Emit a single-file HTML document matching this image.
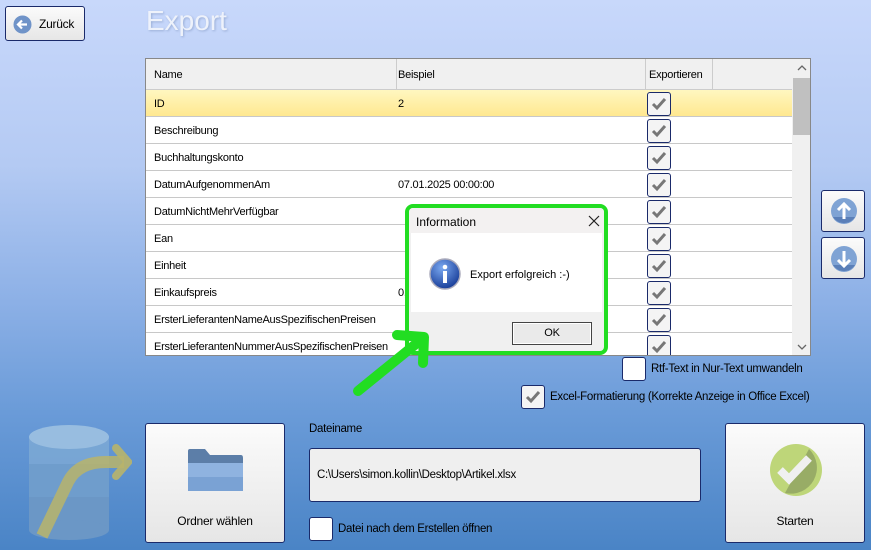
<!DOCTYPE html>
<html><head><meta charset="utf-8">
<style>
*{margin:0;padding:0;box-sizing:border-box}
body{width:871px;height:550px;overflow:hidden;position:relative;font-family:"Liberation Sans",sans-serif;font-size:11px;color:#000;letter-spacing:-0.25px;
background:linear-gradient(180deg,#c8d8fb 0%,#b4caf3 30%,#8cb0e6 55%,#6a9bd8 75%,#4a84c6 100%);}
.abs{position:absolute}
.btn{position:absolute;border:1px solid #1a2a6a;border-radius:3px;background:linear-gradient(#fbfbfb,#e6e6e6)}
.tbl{left:145px;top:58px;width:666px;height:298px;background:#fff;border:1px solid #888;overflow:hidden}
.hdr{position:absolute;left:0;top:0;width:647px;height:31px;background:#f0f0f0;border-bottom:1px solid #ccc}
.row{position:absolute;left:0;width:647px;height:27px;border-bottom:1px solid #c8c8c8}
.c{position:absolute;top:0;line-height:28px}
.cb{position:absolute;width:24px;height:24px;border:1px solid #1a2a6a;border-radius:3px;background:#f4f4f4}
.cb svg{position:absolute;left:3px;top:4px}
.opt{font-size:11.5px;letter-spacing:-0.3px}
</style></head><body>

<div class="btn" style="left:5px;top:6px;width:80px;height:35px">
<svg class="abs" style="left:7px;top:8px" width="19" height="19" viewBox="0 0 19 19"><circle cx="9.5" cy="9.5" r="9" fill="#6f93c8"/><path d="M14 9.5H5M9 5.5L5 9.5L9 13.5" stroke="#fff" stroke-width="2.2" fill="none"/></svg>
<span class="abs" style="left:33px;top:10px;font-size:12px">Zurück</span></div>
<div class="abs" style="left:146px;top:5px;font-size:28px;color:#eef2fb;text-shadow:1px 1px 2px #9aaed6;letter-spacing:0">Export</div>

<div class="abs tbl">
<div class="hdr">
<span class="c" style="left:8px;line-height:32px">Name</span>
<span class="c" style="left:252px;line-height:32px">Beispiel</span>
<span class="c" style="left:503px;line-height:32px">Exportieren</span>
<div class="abs" style="left:250px;top:0;width:1px;height:31px;background:#ccc"></div>
<div class="abs" style="left:499px;top:0;width:1px;height:31px;background:#ccc"></div>
<div class="abs" style="left:566px;top:0;width:1px;height:31px;background:#ccc"></div>
</div>
<div class="row" style="top:31px;background:linear-gradient(#fff7c0,#ffe890)"><span class="c" style="left:8px">ID</span><span class="c" style="left:252px">2</span></div>
<div class="row" style="top:58px"><span class="c" style="left:8px">Beschreibung</span></div>
<div class="row" style="top:85px"><span class="c" style="left:8px">Buchhaltungskonto</span></div>
<div class="row" style="top:112px"><span class="c" style="left:8px">DatumAufgenommenAm</span><span class="c" style="left:252px">07.01.2025 00:00:00</span></div>
<div class="row" style="top:139px"><span class="c" style="left:8px">DatumNichtMehrVerfügbar</span></div>
<div class="row" style="top:166px"><span class="c" style="left:8px">Ean</span></div>
<div class="row" style="top:193px"><span class="c" style="left:8px">Einheit</span></div>
<div class="row" style="top:220px"><span class="c" style="left:8px">Einkaufspreis</span><span class="c" style="left:252px">0,</span></div>
<div class="row" style="top:247px"><span class="c" style="left:8px">ErsterLieferantenNameAusSpezifischenPreisen</span></div>
<div class="row" style="top:274px"><span class="c" style="left:8px">ErsterLieferantenNummerAusSpezifischenPreisen</span></div>
<div class="abs" style="left:646px;top:0;width:18px;height:298px;background:#f0f0f0"></div>
<div class="abs" style="left:647px;top:19px;width:17px;height:57px;background:#c0c0c0"></div>
<svg class="abs" style="left:650px;top:5px" width="12" height="8" viewBox="0 0 12 8"><path d="M2 6l4-4 4 4" stroke="#666" stroke-width="1.3" fill="none"/></svg>
<svg class="abs" style="left:650px;top:284px" width="12" height="8" viewBox="0 0 12 8"><path d="M2 2l4 4 4-4" stroke="#666" stroke-width="1.3" fill="none"/></svg>
</div>

<div class="cb" style="left:647px;top:92px"><svg width="16" height="14" viewBox="0 0 16 14"><path d="M2 7l4 4 8-9" stroke="#777" stroke-width="3" fill="none"/></svg></div>
<div class="cb" style="left:647px;top:119px"><svg width="16" height="14" viewBox="0 0 16 14"><path d="M2 7l4 4 8-9" stroke="#777" stroke-width="3" fill="none"/></svg></div>
<div class="cb" style="left:647px;top:146px"><svg width="16" height="14" viewBox="0 0 16 14"><path d="M2 7l4 4 8-9" stroke="#777" stroke-width="3" fill="none"/></svg></div>
<div class="cb" style="left:647px;top:173px"><svg width="16" height="14" viewBox="0 0 16 14"><path d="M2 7l4 4 8-9" stroke="#777" stroke-width="3" fill="none"/></svg></div>
<div class="cb" style="left:647px;top:200px"><svg width="16" height="14" viewBox="0 0 16 14"><path d="M2 7l4 4 8-9" stroke="#777" stroke-width="3" fill="none"/></svg></div>
<div class="cb" style="left:647px;top:227px"><svg width="16" height="14" viewBox="0 0 16 14"><path d="M2 7l4 4 8-9" stroke="#777" stroke-width="3" fill="none"/></svg></div>
<div class="cb" style="left:647px;top:254px"><svg width="16" height="14" viewBox="0 0 16 14"><path d="M2 7l4 4 8-9" stroke="#777" stroke-width="3" fill="none"/></svg></div>
<div class="cb" style="left:647px;top:281px"><svg width="16" height="14" viewBox="0 0 16 14"><path d="M2 7l4 4 8-9" stroke="#777" stroke-width="3" fill="none"/></svg></div>
<div class="cb" style="left:647px;top:308px"><svg width="16" height="14" viewBox="0 0 16 14"><path d="M2 7l4 4 8-9" stroke="#777" stroke-width="3" fill="none"/></svg></div>
<div class="cb" style="left:647px;top:335px;height:20px;border-bottom:none;border-radius:3px 3px 0 0"><svg width="16" height="14" viewBox="0 0 16 14"><path d="M2 7l4 4 8-9" stroke="#777" stroke-width="3" fill="none"/></svg></div>

<div class="btn" style="left:821px;top:190px;width:44px;height:42px">
<svg class="abs" style="left:8px;top:6px" width="28" height="28" viewBox="0 0 28 28"><circle cx="14" cy="14" r="13" fill="#7fa3d4"/><path d="M3 20A13 13 0 0 0 25 20Z" fill="#5a7fb8"/><path d="M14 22V7M8 13l6-6 6 6" stroke="#fff" stroke-width="3" fill="none"/></svg></div>
<div class="btn" style="left:821px;top:237px;width:44px;height:42px">
<svg class="abs" style="left:8px;top:7px" width="28" height="28" viewBox="0 0 28 28"><circle cx="14" cy="14" r="13" fill="#7fa3d4"/><path d="M3 20A13 13 0 0 0 25 20Z" fill="#5a7fb8"/><path d="M14 6V21M8 15l6 6 6-6" stroke="#fff" stroke-width="3" fill="none"/></svg></div>

<div class="cb" style="left:622px;top:357px;background:#fff"></div>
<div class="abs opt" style="left:651px;top:363px">Rtf-Text in Nur-Text umwandeln</div>
<div class="cb" style="left:521px;top:385px"><svg width="16" height="14" viewBox="0 0 16 14"><path d="M2 7l4 4 8-9" stroke="#777" stroke-width="3" fill="none"/></svg></div>
<div class="abs opt" style="left:550px;top:391px">Excel-Formatierung (Korrekte Anzeige in Office Excel)</div>

<svg class="abs" style="left:28px;top:424px" width="104" height="116" viewBox="0 0 104 116">
<rect x="1" y="13" width="80" height="93" fill="#7eaad4" opacity="0.8"/>
<rect x="1" y="40" width="80" height="33" fill="#6f9dcc"/>
<rect x="1" y="73" width="80" height="33" fill="#6b97c6"/>
<ellipse cx="41" cy="106" rx="40" ry="10" fill="#6b97c6"/>
<ellipse cx="41" cy="13" rx="40" ry="12" fill="#98bde0"/>
<path d="M14 112L40 58Q50 38 78 38H96" stroke="#b8b46a" stroke-width="12" fill="none" opacity="0.85"/>
<path d="M88 24L100 38L88 52" stroke="#b8b46a" stroke-width="8" fill="none" stroke-linecap="round" opacity="0.9"/>
</svg>

<div class="btn" style="left:145px;top:423px;width:140px;height:120px">
<svg class="abs" style="left:42px;top:25px" width="55" height="42" viewBox="0 0 55 42"><path d="M0 2Q0 0 2 0H17L22 6H53Q55 6 55 9V14H0Z" fill="#5c7ea8"/><rect x="0" y="14" width="55" height="28" fill="#8fb3e0"/><rect x="0" y="28" width="55" height="14" fill="#7aa2d4"/></svg>
<div class="abs" style="left:0;width:138px;top:90px;text-align:center;font-size:12px">Ordner wählen</div></div>

<div class="abs opt" style="left:309px;top:423px">Dateiname</div>
<div class="abs" style="left:309px;top:448px;width:392px;height:54px;background:#efefef;border:1px solid #1a2a6a;border-radius:3px"></div>
<div class="abs opt" style="left:317px;top:469px">C:\Users\simon.kollin\Desktop\Artikel.xlsx</div>
<div class="cb" style="left:309px;top:517px;background:#fff"></div>
<div class="abs opt" style="left:338px;top:523px">Datei nach dem Erstellen öffnen</div>

<div class="btn" style="left:725px;top:423px;width:140px;height:120px">
<svg class="abs" style="left:43px;top:19px" width="54" height="54" viewBox="0 0 54 54"><circle cx="27" cy="27" r="26" fill="#bed679"/><path d="M40 6A26 26 0 0 1 16 50Z" fill="#98ac66"/><path d="M11 27l9 9 20-21" stroke="#f0f0f0" stroke-width="8" fill="none"/></svg>
<div class="abs" style="left:0;width:138px;top:90px;text-align:center;font-size:12px">Starten</div></div>

<div class="abs" style="left:405px;top:204px;width:203px;height:151px;border:4px solid #22dd22;border-radius:8px;background:#f0f0f0;overflow:hidden">
<div class="abs" style="left:0;top:0;width:195px;height:25px;background:#f3f1f1"></div>
<div class="abs" style="left:7px;top:7px;font-size:12px;letter-spacing:0">Information</div>
<svg class="abs" style="left:179px;top:7px" width="12" height="12" viewBox="0 0 12 12"><path d="M1 1L11 11M11 1L1 11" stroke="#222" stroke-width="1.2"/></svg>
<div class="abs" style="left:2px;top:25px;width:191px;height:79px;background:#fff"></div>
<svg class="abs" style="left:20px;top:50px" width="32" height="32" viewBox="0 0 32 32"><defs><radialGradient id="g" cx="40%" cy="30%" r="70%"><stop offset="0" stop-color="#7aa8f0"/><stop offset="1" stop-color="#1a3f9a"/></radialGradient></defs><circle cx="16" cy="16" r="15" fill="url(#g)" stroke="#aab" stroke-width="1.5"/><circle cx="16" cy="9" r="2.3" fill="#fff"/><rect x="14" y="13" width="4" height="12" fill="#fff"/></svg>
<div class="abs" style="left:61px;top:61px;font-size:11px;letter-spacing:0">Export erfolgreich :-)</div>
<div class="abs" style="left:103px;top:114px;width:80px;height:23px;border:1px solid #444;background:#eaeaea;box-shadow:inset 0 0 0 1px #fff;text-align:center;line-height:21px;font-size:11px">OK</div>
</div>

<svg class="abs" style="left:340px;top:325px" width="100" height="80" viewBox="0 0 100 80">
<path d="M18 66L82 14M57 10L84 12L83 38" stroke="#22dd22" stroke-width="10" fill="none" stroke-linecap="round" stroke-linejoin="round"/>
</svg>
</body></html>
